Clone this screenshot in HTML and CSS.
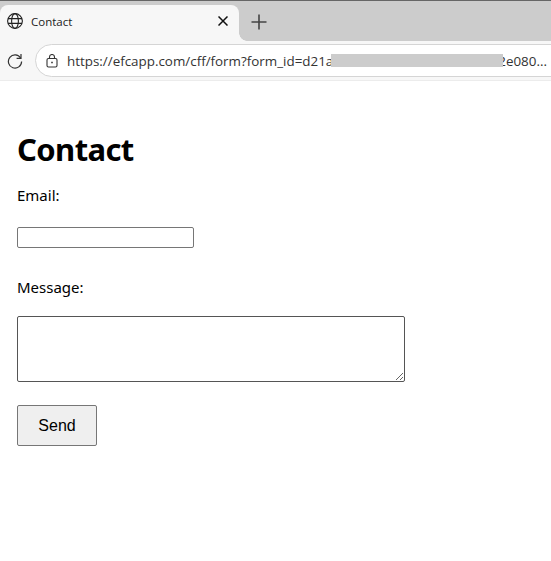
FILE: index.html
```html
<!DOCTYPE html>
<html lang="en">
<head>
<meta charset="utf-8">
<title>Contact</title>
<link rel="stylesheet" href="styles.css">
</head>
<body>
<header class="browser">
  <div class="tabstrip">
    <div class="tab">
      <svg class="globe" viewBox="0 0 16 16" width="16" height="16" fill="none" stroke="#222" stroke-width="1.1"><circle cx="8" cy="8" r="7.4"/><ellipse cx="8" cy="8" rx="3.4" ry="7.4"/><path d="M1 5.6h14M1 10.4h14"/></svg>
      <span class="tab-title">Contact</span>
      <svg class="close" viewBox="0 0 10 10" width="10" height="10" fill="none" stroke="#111" stroke-width="1.5"><path d="M0.5 0.5l9 9M9.5 0.5l-9 9"/></svg>
    </div>
    <svg class="plus" viewBox="0 0 16 16" width="16" height="16" fill="none" stroke="#444" stroke-width="1.6"><path d="M8 0.5v15M0.5 8h15"/></svg>
  </div>
  <div class="toolbar">
    <svg class="reload" viewBox="0 0 16 16" width="16" height="16" fill="none" stroke="#333" stroke-width="1.2"><path d="M13.6 5A6.6 6.6 0 1 0 14.6 8.5"/><path d="M14 1v4.4H9.6"/></svg>
    <div class="omnibox">
      <svg class="lock" viewBox="0 0 12 14" width="12" height="14" fill="none" stroke="#333" stroke-width="1.1"><rect x="1" y="4.5" width="10" height="8.5" rx="1.5"/><path d="M3.5 4.5V3a2.5 2.5 0 0 1 5 0v1.5"/><path d="M5.2 8.5h1.6" stroke-width="1.6"/></svg>
      <span class="url">https://efcapp.com/cff/form?form_id=d21a</span>
      <span class="redaction"></span>
      <span class="url url-end">2e080...</span>
    </div>
  </div>
</header>
<main class="page">
  <h1>Contact</h1>
  <form class="form">
    <label class="label" for="email">Email:</label>
    <input class="email" id="email" type="text">
    <label class="label" for="message">Message:</label>
    <textarea class="message" id="message"></textarea>
    <button class="send" type="button">Send</button>
  </form>
</main>
</body>
</html>
```
FILE: styles.css
```css
* { box-sizing: border-box; }
html, body { margin: 0; padding: 0; background: #fff; }
body { font-family: "Open Sans", "Noto Sans", sans-serif; color: #000; overflow: hidden; height: 561px; }
.browser { height: 81px; background: #f7f7f7; border-bottom: 1px solid #ececec; }
.tabstrip { height: 41px; background: #cccccc; border-top: 1px solid #666; display: flex; align-items: center; padding-top: 4px; }
.tab { position: relative; width: 239px; height: 36px; background: #f7f7f7; border-radius: 8px 8px 0 0; display: flex; align-items: center; padding: 0 11px 4px 7px; flex: none; }
.tab::after { content: ""; position: absolute; right: -8px; bottom: 0; width: 8px; height: 8px; background: radial-gradient(circle at 100% 0, transparent 7.5px, #f7f7f7 8px); }
.globe { flex: none; }
.tab-title { font-size: 11.5px; margin-left: 8px; flex: 1; color: #222; }
.close { flex: none; }
.plus { flex: none; margin-left: 12px; margin-top: -2px; }
.toolbar { height: 39px; display: flex; align-items: center; padding-left: 7px; }
.reload { flex: none; }
.omnibox { margin-left: 12px; flex: 1; min-width: 0; height: 33px; margin-right: -20px; background: #fff; border: 1px solid #d5d5d5; border-radius: 17px; display: flex; align-items: center; padding-left: 10px; }
.lock { flex: none; }
.url { font-size: 13.4px; color: #333; margin-left: 9px; white-space: nowrap; }
.redaction { width: 172px; height: 13px; background: #cccccc; flex: none; margin-left: -2px; position: relative; }
.url-end { margin-left: -5px; }
.page { padding: 0 17px; }
h1 { font-family: "Noto Sans", "Open Sans", sans-serif; font-size: 31px; font-weight: 700; letter-spacing: -0.6px; line-height: 44px; margin: 46px 0 0; }
.form { display: flex; flex-direction: column; align-items: flex-start; }
.label { font-family: "Noto Sans", "Open Sans", sans-serif; font-size: 15px; line-height: 20px; }
.form .label:first-child { margin-top: 14px; }
.email { width: 177px; height: 21px; margin-top: 22px; border: 1px solid #767676; border-radius: 2px; background: #fff; padding: 1px 2px; }
.email + .label { margin-top: 29px; }
.message { width: 388px; height: 66px; margin-top: 19px; border: 1px solid #555; border-radius: 2px; background: #fff; display: block; }
.send { width: 80px; height: 41px; margin-top: 23px; background: #efefef; border: 1px solid #767676; border-radius: 2px; font-family: "Liberation Sans", Arial, sans-serif; font-size: 16px; color: #000; padding: 0; }
```
